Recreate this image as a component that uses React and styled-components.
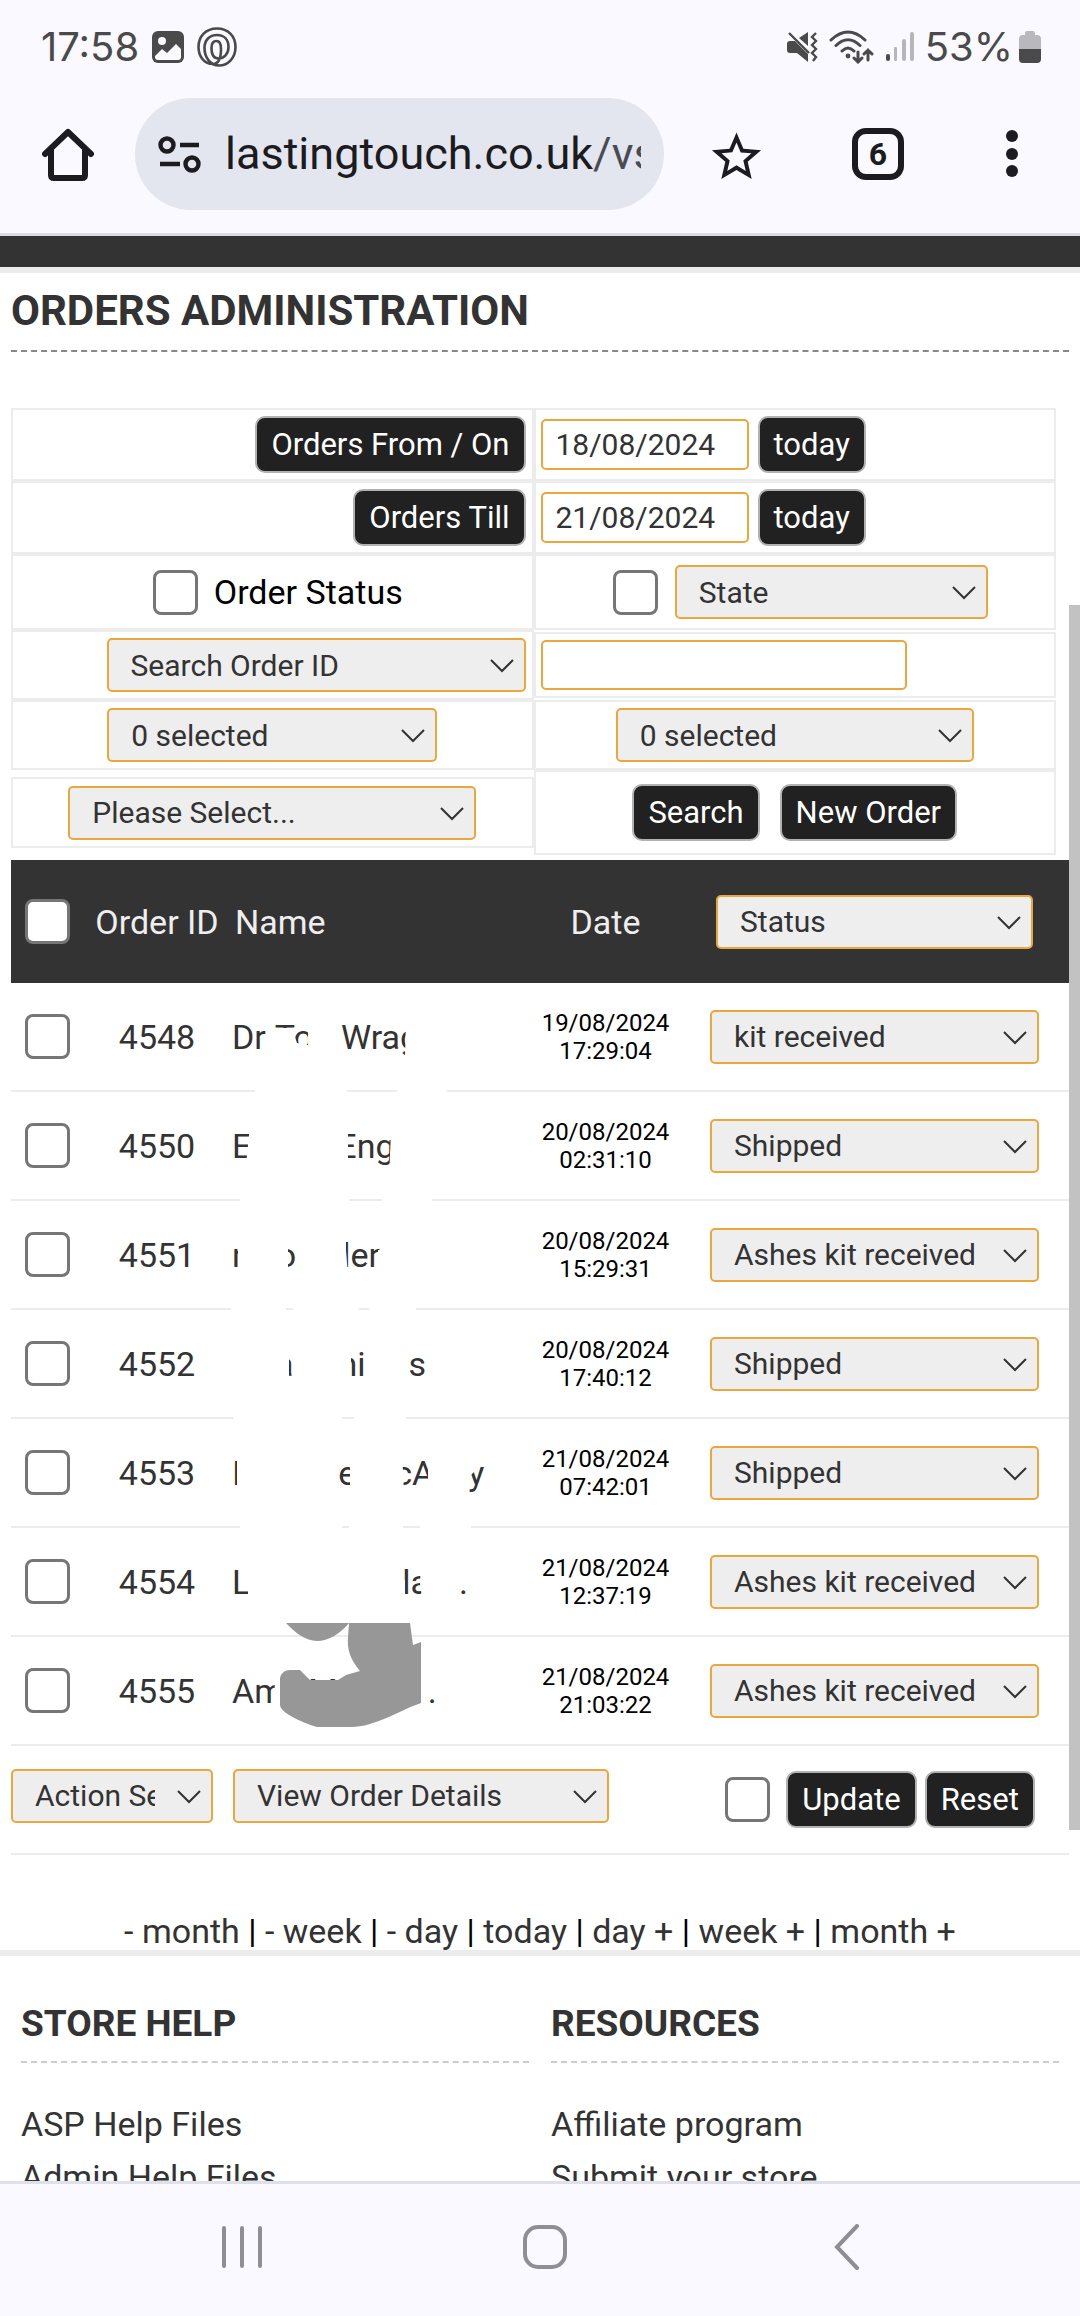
import { useState } from 'react';
import styled, { createGlobalStyle, css } from 'styled-components';

const GlobalStyle = createGlobalStyle`
  * {
    box-sizing: border-box;
  }

  body {
    margin: 0;
    background-color: #fff;
    color: #333;
    font-family: Roboto, 'Noto Sans', sans-serif;
    font-size: 34px;
    line-height: 38px;
  }

  button,
  input,
  select {
    font-family: inherit;
    margin: 0;
  }
`;

/* ---------- device ---------- */

const Screen = styled.div`
  display: flex;
  flex-direction: column;
  height: 100vh;
  overflow: hidden;
`;

const StatusBar = styled.div`
  display: flex;
  align-items: center;
  justify-content: space-between;
  height: 94px;
  padding: 0 39px 0 41px;
  background-color: #faf9ff;
  color: #4a4a4a;
  font-family: Inter, Roboto, sans-serif;
  font-size: 40px;
`;

const StatusGroup = styled.div`
  display: flex;
  align-items: center;
  gap: ${(props) => props.$gap}px;
`;

const Toolbar = styled.div`
  display: flex;
  align-items: center;
  height: 142px;
  padding: 0 36px 19px 36px;
  background-color: #faf9ff;
  border-bottom: 3px solid #dcdbe3;
`;

const IconButton = styled.button`
  display: flex;
  align-items: center;
  justify-content: center;
  width: ${(props) => props.$width || 64}px;
  height: 64px;
  padding: 0;
  border: none;
  background: none;
`;

const ToolbarActions = styled.div`
  display: flex;
  align-items: center;
  gap: 70px;
  margin-left: 33px;
`;

const AddressBar = styled.div`
  display: flex;
  align-items: center;
  flex: 1;
  gap: 23px;
  min-width: 0;
  height: 112px;
  margin-left: 35px;
  padding: 0 23px;
  border-radius: 56px;
  background-color: #e3e6ef;
`;

const Url = styled.div`
  flex: 1;
  overflow: hidden;
  white-space: nowrap;
  color: #1b1b20;
  font-size: 45px;
  line-height: 60px;

  span {
    color: #494b54;
  }
`;

const TabCount = styled.span`
  display: flex;
  align-items: center;
  justify-content: center;
  width: 52px;
  height: 52px;
  border: 6px solid #1b1b20;
  border-radius: 14px;
  color: #1b1b20;
  font-size: 32px;
  font-weight: 700;
`;

const NavBar = styled.nav`
  display: flex;
  flex-shrink: 0;
  align-items: center;
  justify-content: space-between;
  height: 135px;
  padding: 0 191px 6px 200px;
  border-top: 3px solid #e0e0ea;
  background-color: #faf9ff;
`;

const NavButton = styled(IconButton)`
  width: 84px;
  height: 84px;
`;

/* ---------- page ---------- */

const Viewport = styled.div`
  position: relative;
  flex: 1;
  min-height: 0;
  overflow: hidden;
`;

const ScrollThumb = styled.div`
  position: absolute;
  top: 369px;
  right: 0;
  width: 11px;
  height: 1225px;
  background-color: #c2c2c2;
`;

const TopBand = styled.div`
  height: 37px;
  background-color: #333;
  border-bottom: 6px solid #ececec;
`;

const Main = styled.main`
  padding: 0 11px;
`;

const Title = styled.h1`
  margin: 0 0 56px;
  padding: 13px 0 14px;
  border-bottom: 2px dashed #888;
  font-size: 42px;
  line-height: 50px;
`;

const Filters = styled.form`
  display: grid;
  grid-template-columns: 1fr 1fr;
  margin-bottom: 5px;
  padding-right: 13px;
`;

const FilterCell = styled.div`
  display: flex;
  align-items: center;
  justify-content: ${(props) => props.$align || 'center'};
  gap: ${(props) => props.$gap || 9}px;
  min-width: 0;
  margin: ${(props) => props.$inset || 0}px 0;
  padding: ${(props) => props.$pad || 6}px 5px;
  padding-right: ${(props) => (props.$align === 'flex-end' ? 6 : 5)}px;
  border: 2px solid #ececec;
`;

const Button = styled.button`
  height: 57px;
  padding: 0 14px;
  border: 2px solid #b2b2b2;
  border-radius: 10px;
  background-color: #212121;
  color: #fff;
  font-size: 31px;
  line-height: 40px;
  white-space: nowrap;
`;

const fieldStyles = css`
  border: 2px solid #eba63c;
  border-radius: 5px;
  color: #333;
  font-size: 30px;
`;

const TextInput = styled.input`
  ${fieldStyles}
  width: ${(props) => props.$width}px;
  height: ${(props) => props.$height || 51}px;
  padding: 0 13px;
  background-color: #fff;
`;

const SelectWrap = styled.div`
  position: relative;
  width: ${(props) => props.$width}px;
  max-width: 100%;
`;

const StyledSelect = styled.select`
  ${fieldStyles}
  display: block;
  width: 100%;
  height: 54px;
  padding: 0 56px 0 22px;
  appearance: none;
  background-color: #eee;
`;

const Chevron = styled.svg`
  position: absolute;
  top: 21px;
  right: 12px;
  pointer-events: none;
`;

const Checkbox = styled.input.attrs({ type: 'checkbox' })`
  flex-shrink: 0;
  display: block;
  width: 45px;
  height: 45px;
  margin-left: ${(props) => props.$indent || 0}px;
  border: 3px solid #767676;
  border-radius: 8px;
  background-color: #fff;
  appearance: none;

  &:checked {
    background-color: #767676;
  }
`;

const CheckLabel = styled.label`
  display: flex;
  align-items: center;
  gap: 16px;
  color: #000;
`;

const OrdersWrap = styled.div`
  position: relative;
`;

const OrdersTable = styled.table`
  width: 100%;
  table-layout: fixed;
  border-collapse: separate;
  border-spacing: 0;
`;

const Col = styled.col`
  width: ${(props) => props.$width};
`;

const HeadCell = styled.th`
  height: 123px;
  padding: 0 0 0 ${(props) => props.$left || 0}px;
  background-color: #333;
  color: #eee;
  font-weight: 400;
  text-align: ${(props) => props.$align || 'center'};
  white-space: nowrap;
`;

const Cell = styled.td`
  height: 109px;
  padding: 0 0 ${(props) => props.$bottom || 0}px ${(props) => props.$left || 0}px;
  border-bottom: 2px solid #ececec;
  text-align: ${(props) => props.$align || 'center'};
  white-space: nowrap;
`;

const DateCell = styled(Cell)`
  color: #000;
  font-size: 24px;
  line-height: 28px;
`;

const Centered = styled.div`
  display: flex;
  align-items: center;
  justify-content: center;
  gap: ${(props) => props.$gap || 0}px;
`;

const NamePart = styled.span`
  display: inline-block;
  margin-left: ${(props) => props.$gap}px;
`;

const Redaction = styled.svg`
  position: absolute;
  top: 124px;
  left: 219px;
  pointer-events: none;
`;

const Pager = styled.div`
  margin: 57px 0 0;
  color: #000;
  text-align: center;
`;

const PlainLink = styled.a`
  color: #333;
  text-decoration: none;
`;

const Footer = styled.footer`
  display: grid;
  grid-template-columns: 1fr 1fr;
  gap: 22px;
  padding: 46px 21px 0;
  border-top: 6px solid #ececec;
`;

const FooterTitle = styled.h2`
  margin: 0 0 35px;
  padding-bottom: 15px;
  border-bottom: 2px dashed #ccc;
  font-size: 37px;
  line-height: 44px;
`;

const FooterList = styled.ul`
  margin: 0;
  padding: 0;
  list-style: none;
  line-height: 53px;
`;

/* ---------- data ---------- */

const orders = [
  {
    id: 4548,
    name: [['Dr', 0], ['To', 9], ['Wrag', 28]],
    date: '19/08/2024',
    time: '17:29:04',
    status: 'kit received',
  },
  {
    id: 4550,
    name: [['E', 0], ['Eng', 86]],
    date: '20/08/2024',
    time: '02:31:10',
    status: 'Shipped',
  },
  {
    id: 4551,
    name: [['n', 0], ['o', 26], ['ler', 46]],
    date: '20/08/2024',
    time: '15:29:31',
    status: 'Ashes kit received',
  },
  {
    id: 4552,
    name: [['a', 43], ['ni', 45], ['s', 43]],
    date: '20/08/2024',
    time: '17:40:12',
    status: 'Shipped',
  },
  {
    id: 4553,
    name: [['I', 0], ['e', 97], ['cA', 38], ['y', 34]],
    date: '21/08/2024',
    time: '07:42:01',
    status: 'Shipped',
  },
  {
    id: 4554,
    name: [['L', 0], ['la', 152], ['.', 30]],
    date: '21/08/2024',
    time: '12:37:19',
    status: 'Ashes kit received',
  },
  {
    id: 4555,
    name: [['Am', 0], ['M', 24], ['.', 90]],
    date: '21/08/2024',
    time: '21:03:22',
    status: 'Ashes kit received',
  },
];

const statuses = ['kit received', 'Shipped', 'Ashes kit received'];

const pagerLinks = [
  '- month',
  '- week',
  '- day',
  'today',
  'day +',
  'week +',
  'month +',
];

const footerColumns = [
  { title: 'STORE HELP', links: ['ASP Help Files', 'Admin Help Files'] },
  { title: 'RESOURCES', links: ['Affiliate program', 'Submit your store'] },
];

/* ---------- icons ---------- */

function PictureIcon() {
  return (
    <svg width='32' height='32' viewBox='0 0 32 32'>
      <rect width='32' height='32' rx='6' fill='#4a4a4a' />
      <circle cx='10' cy='10' r='4' fill='#faf9ff' />
      <path
        d='M3 25l7-7 5 4 9-9 5 5v8q0 3-3 3H6q-3 0-3-3z'
        fill='#faf9ff'
      />
    </svg>
  );
}

function SpiralIcon() {
  return (
    <svg
      width='40'
      height='40'
      viewBox='0 0 40 40'
      fill='none'
      stroke='#4a4a4a'
      strokeWidth='2.6'
    >
      <path d='M16 37C6 37 1.500 28 1.500 20C1.500 9 9 1.500 20 1.500S38.500 9 38.500 20S31 38.500 22 38.500C13 38.500 7.500 30 7.500 21C7.500 13 12.500 8 20 8S31.500 13 31.500 20S27 31.500 21.500 31.500C16 31.500 14.500 26 14.500 21C14.500 17 16 14 19.500 14S24 17 24 22C24 31 22 37 16 37' />
    </svg>
  );
}

function MuteIcon() {
  return (
    <svg width='31' height='30' viewBox='0 0 31 30'>
      <path
        d='M0 12q0-3 3-3h5l13 13v8L10 21H3q-3 0-3-3zM21 0v14l-9-8z'
        fill='#4a4a4a'
      />
      <path
        d='M2 1l20 20M29 1l-4 4 4 4-4 4 4 4-4 4 4 4-3 4'
        fill='none'
        stroke='#4a4a4a'
        strokeWidth='2.4'
      />
    </svg>
  );
}

function WifiIcon() {
  return (
    <svg
      width='46'
      height='34'
      viewBox='0 0 46 34'
      fill='none'
      stroke='#4a4a4a'
      strokeWidth='3'
      strokeLinecap='round'
    >
      <path d='M2 10Q19-6 36 10M7 15.500Q19 4 31 15.500M13 21Q19 15 25 21' />
      <circle cx='19' cy='26' r='2.400' fill='#4a4a4a' stroke='none' />
      <path d='M29 22v10M25 28l4 4 4-4M39 30V20M35 24l4-4 4 4' />
    </svg>
  );
}

function SignalIcon() {
  return (
    <svg width='28' height='30' viewBox='0 0 28 30'>
      <rect x='0' y='22' width='4' height='7' rx='2' fill='#4a4a4a' />
      <rect x='8' y='15' width='3' height='14' rx='1' fill='#b6b6ba' />
      <rect x='16' y='7' width='4' height='22' rx='2' fill='#b6b6ba' />
      <rect x='24' y='0' width='4' height='29' rx='2' fill='#b6b6ba' />
    </svg>
  );
}

function BatteryIcon() {
  return (
    <svg width='22' height='32' viewBox='0 0 22 32'>
      <path
        d='M6 2q0-2 2-2h6q2 0 2 2v2h2q4 0 4 4v11H0V8q0-4 4-4h2z'
        fill='#b9b9bd'
      />
      <path d='M0 18h22v10q0 4-4 4H4q-4 0-4-4z' fill='#4a4a4a' />
    </svg>
  );
}

function HomeIcon() {
  return (
    <svg
      width='52'
      height='53'
      viewBox='0 0 52 53'
      fill='none'
      stroke='#1b1b20'
      strokeWidth='6'
      strokeLinecap='round'
      strokeLinejoin='round'
    >
      <path d='M3 26L26 4l23 22M9 22v25q0 3 3 3h28q3 0 3-3V22' />
    </svg>
  );
}

function SiteIcon() {
  return (
    <svg
      width='44'
      height='37'
      viewBox='0 0 44 37'
      fill='none'
      stroke='#1b1b20'
      strokeWidth='4.400'
    >
      <circle cx='9' cy='9' r='6.500' />
      <circle cx='34' cy='28' r='6.500' />
      <path d='M22 9h19M2 28h20' />
    </svg>
  );
}

function StarIcon() {
  return (
    <svg width='59' height='59' viewBox='0 -1 24 24' fill='#1b1b20'>
      <path d='M22 9.240l-7.190-.620L12 2 9.190 8.630 2 9.240l5.460 4.730L5.820 21 12 17.270 18.180 21l-1.630-7.030L22 9.240zM12 15.400l-3.760 2.270 1-4.280-3.320-2.880 4.380-.380L12 6.100l1.710 4.040 4.380.380-3.320 2.880 1 4.280L12 15.400z' />
    </svg>
  );
}

function DotsIcon() {
  return (
    <svg width='12' height='48' viewBox='0 0 12 48' fill='#1b1b20'>
      <circle cx='6' cy='6' r='6' />
      <circle cx='6' cy='24' r='6' />
      <circle cx='6' cy='41' r='6' />
    </svg>
  );
}

/* ---------- parts ---------- */

function Select({ label, options, width, value }) {
  return (
    <SelectWrap $width={width}>
      <StyledSelect aria-label={label} defaultValue={value}>
        {options.map((option) => (
          <option key={option}>{option}</option>
        ))}
      </StyledSelect>
      <Chevron width='24' height='14' viewBox='0 0 24 14'>
        <path d='M1 1l11 11L23 1' fill='none' stroke='#333' strokeWidth='2' />
      </Chevron>
    </SelectWrap>
  );
}

function DateField({ label, value, onChange }) {
  return (
    <>
      <TextInput
        $width={208}
        aria-label={label}
        value={value}
        onChange={(e) => onChange(e.target.value)}
      />
      <Button type='button' onClick={() => onChange('21/08/2024')}>
        today
      </Button>
    </>
  );
}

function OrderFilters() {
  const [from, setFrom] = useState('18/08/2024');
  const [till, setTill] = useState('21/08/2024');

  return (
    <Filters onSubmit={(e) => e.preventDefault()}>
      <FilterCell $align='flex-end'>
        <Button type='button'>Orders From / On</Button>
      </FilterCell>
      <FilterCell $align='flex-start'>
        <DateField label='Orders from' value={from} onChange={setFrom} />
      </FilterCell>

      <FilterCell $align='flex-end'>
        <Button type='button'>Orders Till</Button>
      </FilterCell>
      <FilterCell $align='flex-start'>
        <DateField label='Orders till' value={till} onChange={setTill} />
      </FilterCell>

      <FilterCell $pad={9}>
        <CheckLabel>
          <Checkbox $indent={11} />
          Order Status
        </CheckLabel>
      </FilterCell>
      <FilterCell $pad={9} $gap={17}>
        <Checkbox $indent={11} aria-label='Filter by state' />
        <Select label='State' options={['State']} width={313} />
      </FilterCell>

      <FilterCell $align='flex-end'>
        <Select label='Search by' options={['Search Order ID']} width={419} />
      </FilterCell>
      <FilterCell $align='flex-start' $inset={2}>
        <TextInput $width={366} $height={50} aria-label='Search text' />
      </FilterCell>

      <FilterCell>
        <Select label='Order statuses' options={['0 selected']} width={330} />
      </FilterCell>
      <FilterCell>
        <Select label='States' options={['0 selected']} width={358} />
      </FilterCell>

      <FilterCell $inset={7}>
        <Select label='More' options={['Please Select...']} width={408} />
      </FilterCell>
      <FilterCell $pad={12} $gap={20}>
        <Button type='submit'>Search</Button>
        <Button type='button'>New Order</Button>
      </FilterCell>
    </Filters>
  );
}

function OrderRow({ order }) {
  const { id, name, date, time, status } = order;

  return (
    <tr>
      <Cell $left={14}>
        <Checkbox aria-label={`Select order ${id}`} />
      </Cell>
      <Cell>
        <PlainLink href='#order'>{id}</PlainLink>
      </Cell>
      <Cell $align='left' $left={2}>
        {name.map(([text, gap]) => (
          <NamePart key={text} $gap={gap}>
            {text}
          </NamePart>
        ))}
      </Cell>
      <DateCell>
        {date}
        <br />
        {time}
      </DateCell>
      <Cell>
        <Centered>
          <Select
            label={`Status of order ${id}`}
            options={statuses}
            value={status}
            width={329}
          />
        </Centered>
      </Cell>
    </tr>
  );
}

// brush strokes that hide the customer names
function NameRedaction() {
  return (
    <Redaction width='271' height='763' viewBox='230 984 271 763'>
      <g fill='#fff'>
        <path d='M255 1086h92v12h-92zM397 1086h50v12h-50z' />
        <path d='M240 1195h109v12H240zM382 1195h50v12h-50z' />
        <path d='M231 1304h55v12h-55zM293 1304h66v12h-66zM369 1304h47v12h-47z' />
        <path d='M233 1413h109v12H233zM354 1413h52v12h-52z' />
        <path d='M240 1522h102v12H240zM349 1522h54v12h-54zM420 1522h51v12h-51z' />
        <path d='M266 1028h26l5 15 16 3v14h-47zM308 1018h14v40h-14zM406 1018h22v50h-20l-3-12z' />
        <path d='M250 1125l-5 50h50v-50zM330 1120h18v50h-18zM391 1130h10v50h-12z' />
        <path d='M238 1230h50v50h-50zM338 1230h8v20l2 26h-10zM378 1250h8v20h-8z' />
        <path d='M272 1340h17v44h-17zM335 1340h12l4 18v26h-16z' />
        <path d='M237 1450h16v44h-16zM350 1450h20v44h-20zM392 1450h10l2 44h-12zM428 1450h14v44h-14zM466 1450h6l2 22-4 4h-8z' />
        <path d='M248 1560h10v44h-10zM400 1580h5v24h-5zM421 1560h20v44h-18l-3-20z' />
        <path d='M274 1670h10v44h-8z' />
      </g>
      <g fill='#979797'>
        <path d='M286 1623h63C340 1634 328 1641 317 1641C306 1641 294 1632 286 1623z' />
        <path d='M349 1623h61l3 22 8-3v61C400 1710 375 1727 351 1727H317C300 1722 280 1712 280 1705V1678Q282 1670 290 1670H300L310 1680H338L346 1675 360 1671Q346 1655 348 1637z' />
      </g>
    </Redaction>
  );
}

function OrderList() {
  return (
    <OrdersWrap>
      <OrdersTable>
        <colgroup>
          <Col $width='73px' />
          <Col $width='146px' />
          <Col />
          <Col $width='149px' />
          <Col $width='389px' />
        </colgroup>
        <thead>
          <tr>
            <HeadCell $left={14}>
              <Checkbox aria-label='Select all orders' />
            </HeadCell>
            <HeadCell>Order ID</HeadCell>
            <HeadCell $align='left' $left={5}>
              Name
            </HeadCell>
            <HeadCell>Date</HeadCell>
            <HeadCell>
              <Centered>
                <Select label='Status' options={['Status']} width={317} />
              </Centered>
            </HeadCell>
          </tr>
        </thead>
        <tbody>
          {orders.map((order) => (
            <OrderRow key={order.id} order={order} />
          ))}
        </tbody>
        <tfoot>
          <tr>
            <Cell colSpan={2} $bottom={8}>
              <Select label='Action' options={['Action Select']} width={202} />
            </Cell>
            <Cell colSpan={2} $bottom={8} $left={3}>
              <Select
                label='View'
                options={['View Order Details']}
                width={376}
              />
            </Cell>
            <Cell>
              <Centered $gap={8}>
                <Centered $gap={16}>
                  <Checkbox $indent={11} aria-label='Confirm update' />
                  <Button type='button'>Update</Button>
                </Centered>
                <Button type='reset'>Reset</Button>
              </Centered>
            </Cell>
          </tr>
        </tfoot>
      </OrdersTable>
      <NameRedaction />
    </OrdersWrap>
  );
}

function App() {
  return (
    <>
      <GlobalStyle />
      <Screen>
        <StatusBar>
          <StatusGroup $gap={13}>
            <span>17:58</span>
            <PictureIcon />
            <SpiralIcon />
          </StatusGroup>
          <StatusGroup $gap={6}>
            <StatusGroup $gap={11}>
              <MuteIcon />
              <WifiIcon />
              <SignalIcon />
              <span>53%</span>
            </StatusGroup>
            <BatteryIcon />
          </StatusGroup>
        </StatusBar>

        <Toolbar>
          <IconButton aria-label='Home'>
            <HomeIcon />
          </IconButton>
          <AddressBar>
            <SiteIcon />
            <Url>
              lastingtouch.co.uk<span>/vs</span>
            </Url>
          </AddressBar>
          <ToolbarActions>
            <IconButton $width={79} aria-label='Bookmark'>
              <StarIcon />
            </IconButton>
            <IconButton aria-label='Tabs'>
              <TabCount>6</TabCount>
            </IconButton>
            <IconButton aria-label='Menu'>
              <DotsIcon />
            </IconButton>
          </ToolbarActions>
        </Toolbar>

        <Viewport>
          <TopBand />
          <Main>
            <Title>ORDERS ADMINISTRATION</Title>
            <OrderFilters />
            <OrderList />
            <Pager>
              {pagerLinks.map((link, i) => (
                <span key={link}>
                  {i > 0 && ' | '}
                  <PlainLink href='#range'>{link}</PlainLink>
                </span>
              ))}
            </Pager>
          </Main>
          <Footer>
            {footerColumns.map(({ title, links }) => (
              <section key={title}>
                <FooterTitle>{title}</FooterTitle>
                <FooterList>
                  {links.map((link) => (
                    <li key={link}>
                      <PlainLink href='#footer'>{link}</PlainLink>
                    </li>
                  ))}
                </FooterList>
              </section>
            ))}
          </Footer>
          <ScrollThumb />
        </Viewport>

        <NavBar>
          <NavButton aria-label='Recent apps'>
            <svg width='40' height='42' viewBox='0 0 40 42' fill='#8f8f93'>
              <rect width='4' height='42' rx='2' />
              <rect x='18' width='4' height='42' rx='2' />
              <rect x='36' width='4' height='42' rx='2' />
            </svg>
          </NavButton>
          <NavButton aria-label='Home screen'>
            <svg width='44' height='44' viewBox='0 0 44 44'>
              <rect
                x='2'
                y='2'
                width='40'
                height='40'
                rx='13'
                fill='none'
                stroke='#8f8f93'
                strokeWidth='4'
              />
            </svg>
          </NavButton>
          <NavButton aria-label='Back'>
            <svg width='26' height='46' viewBox='0 0 26 46'>
              <path
                d='M23 2L3 23l20 21'
                fill='none'
                stroke='#8f8f93'
                strokeWidth='4'
                strokeLinecap='round'
              />
            </svg>
          </NavButton>
        </NavBar>
      </Screen>
    </>
  );
}

export default App;
